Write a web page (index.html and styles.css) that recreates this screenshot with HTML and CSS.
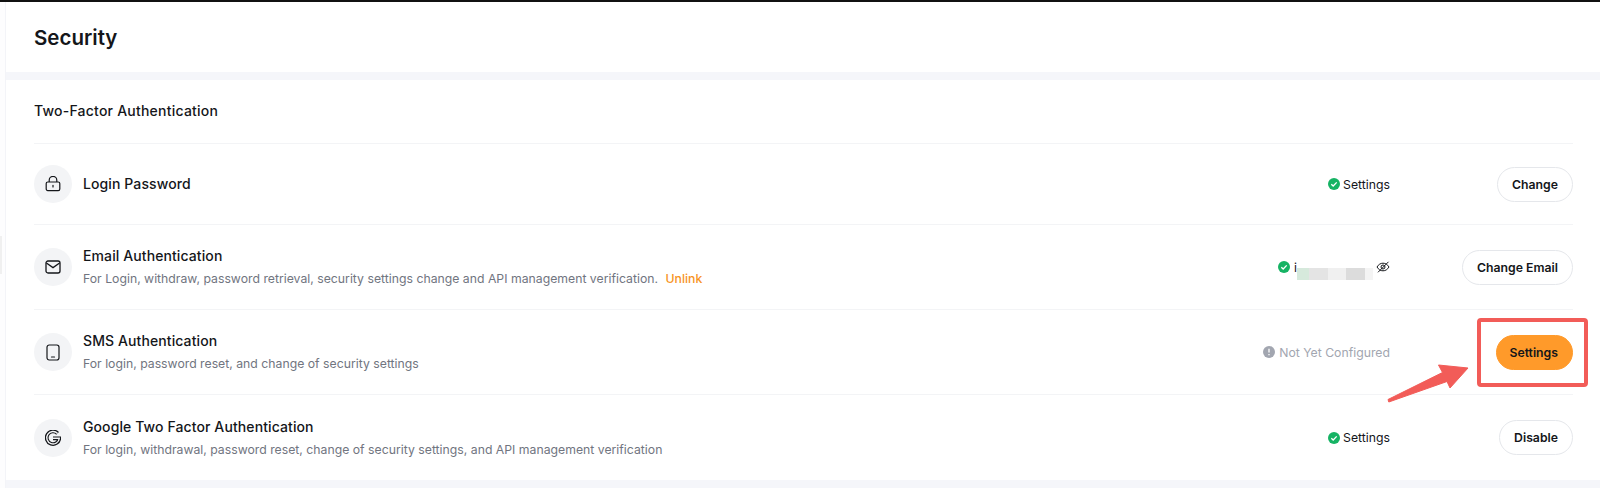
FILE: index.html
```html
<!DOCTYPE html>
<html lang="en">
<head>
    <meta charset="UTF-8">
    <title>Security</title>
    <link rel="stylesheet" href="styles.css">
</head>
<body>
    <div class="side-handle"></div>
    <div class="page">
        <header class="page-head">
            <h1>Security</h1>
        </header>

        <section class="card">
            <h2>Two-Factor Authentication</h2>

            <div class="row row-first">
                <div class="icon-circle">
                    <svg width="16" height="16" viewBox="0 0 16 16" fill="none" stroke="#14161a" stroke-width="1.2"><rect x="1.2" y="6" width="13.6" height="8.6" rx="1.6"/><path d="M4.2 6V4.2a3.8 3.8 0 0 1 7.6 0V6"/><path d="M8 9.4v1.6" stroke-linecap="round"/></svg>
                </div>
                <div class="info">
                    <div class="name">Login Password</div>
                </div>
                <div class="status">
                    <svg class="dot" width="12" height="12" viewBox="0 0 12 12"><circle cx="6" cy="6" r="6" fill="#16b364"/><path d="M3.3 6.2l1.9 1.8 3.5-3.6" fill="none" stroke="#fff" stroke-width="1.3"/></svg>
                    Settings
                </div>
                <div class="action"><button class="btn">Change</button></div>
            </div>

            <div class="row">
                <div class="icon-circle">
                    <svg width="16" height="14" viewBox="0 0 16 14" fill="none" stroke="#14161a" stroke-width="1.3"><rect x="1" y="1" width="14" height="12" rx="2"/><path d="M1.4 3l6.6 4.6L14.6 3"/></svg>
                </div>
                <div class="info">
                    <div class="name">Email Authentication</div>
                    <div class="desc">For Login, withdraw, password retrieval, security settings change and API management verification. <a class="unlink">Unlink</a></div>
                </div>
                <div class="status status-email">
                    <svg class="dot" width="12" height="12" viewBox="0 0 12 12"><circle cx="6" cy="6" r="6" fill="#16b364"/><path d="M3.3 6.2l1.9 1.8 3.5-3.6" fill="none" stroke="#fff" stroke-width="1.3"/></svg>
                    <span class="masked">i</span>
                    <svg class="eye" width="14" height="12" viewBox="0 0 14 12" fill="none" stroke="#14161a" stroke-width="1"><path d="M1 6c1.6-2.6 3.6-3.8 6-3.8S11.4 3.4 13 6c-1.6 2.6-3.6 3.8-6 3.8S2.6 8.6 1 6z"/><circle cx="7" cy="6" r="2"/><path d="M2 11.3L12.5.8"/></svg>
                    <div class="redact"><i></i><i></i><i></i><i></i><i></i></div>
                </div>
                <div class="action"><button class="btn">Change Email</button></div>
            </div>

            <div class="row">
                <div class="icon-circle">
                    <svg width="14" height="17" viewBox="0 0 14 17" fill="none" stroke="#14161a" stroke-width="1.2"><rect x="1" y="1" width="12" height="15" rx="2.2"/><path d="M5.5 13h3" stroke-linecap="round"/></svg>
                </div>
                <div class="info">
                    <div class="name">SMS Authentication</div>
                    <div class="desc">For login, password reset, and change of security settings</div>
                </div>
                <div class="status status-off">
                    <svg class="dot" width="12" height="12" viewBox="0 0 12 12"><circle cx="6" cy="6" r="6" fill="#a2a6b0"/><path d="M6 2.8v3.8M6 8v1.2" stroke="#fff" stroke-width="1.3"/></svg>
                    Not Yet Configured
                </div>
                <div class="action">
                    <button class="btn btn-primary">Settings</button>
                    <div class="mark-box"></div>
                </div>
            </div>

            <div class="row">
                <div class="icon-circle">
                    <svg width="16" height="16" viewBox="0 0 16 16" fill="none"><path d="M12.6 3.4A6.3 6.3 0 1 0 14.3 8.3H8" stroke="#14161a" stroke-width="3.8"/><path d="M12.6 3.4A6.3 6.3 0 1 0 14.3 8.3H8" stroke="#f3f4f6" stroke-width="1.4"/></svg>
                </div>
                <div class="info">
                    <div class="name">Google Two Factor Authentication</div>
                    <div class="desc">For login, withdrawal, password reset, change of security settings, and API management verification</div>
                </div>
                <div class="status">
                    <svg class="dot" width="12" height="12" viewBox="0 0 12 12"><circle cx="6" cy="6" r="6" fill="#16b364"/><path d="M3.3 6.2l1.9 1.8 3.5-3.6" fill="none" stroke="#fff" stroke-width="1.3"/></svg>
                    Settings
                </div>
                <div class="action"><button class="btn">Disable</button></div>
            </div>
        </section>
    </div>

    <!-- annotation arrow over the screenshot -->
    <svg class="arrow" width="90" height="46" viewBox="0 0 90 46"><path d="M1 39.5L1.8 42 60 21.5 63 28 81 8 51.5 5 55.5 12.5z" fill="#f25c58" stroke="#f25c58" stroke-linejoin="round"/></svg>
</body>
</html>
```

FILE: styles.css
```css
* {
    box-sizing: border-box;
}
html, body {
    margin: 0;
    height: 488px;
    overflow: hidden;
}
body {
    position: relative;
    font-family: 'Inter', 'Liberation Sans', sans-serif;
    background-color: #fdfdfe;
    color: #14161a;
    border-top: 2px solid #111;
}
.side-handle {
    position: absolute;
    left: 0;
    top: 234px;
    width: 2px;
    height: 38px;
    background-color: #f0f0f0;
}
.page {
    height: 486px;
    margin-left: 5px;
    background-color: #f5f6fa;
    border-left: 1px solid #f3f4f8;
}
.page-head {
    height: 70px;
    padding-left: 28px;
    display: flex;
    align-items: center;
    background-color: #fff;
}
h1 {
    margin: 1px 0 0;
    font-size: 20.5px;
    font-weight: 600;
}
.card {
    margin-top: 8px;
    padding: 0 27px 0 28px;
    background-color: #fff;
}
h2 {
    margin: 0;
    height: 64px;
    padding-top: 21px;
    font-size: 14px;
    line-height: 20px;
    font-weight: 500;
    letter-spacing: 0.22px;
    border-bottom: 1px solid #f3f4f6;
}
.row {
    display: flex;
    align-items: center;
    height: 85px;
    border-bottom: 1px solid #f3f4f6;
}
.row-first {
    height: 81px;
}
.row:last-child {
    border-bottom: none;
}
.icon-circle {
    width: 38px;
    height: 38px;
    margin-right: 11px;
    flex: none;
    display: flex;
    align-items: center;
    justify-content: center;
    border-radius: 50%;
    background-color: #f3f4f6;
}
.info {
    flex: 1;
}
.name {
    font-size: 14px;
    line-height: 20px;
    font-weight: 500;
    letter-spacing: 0.1px;
}
.desc {
    margin-top: 4px;
    font-size: 12.25px;
    line-height: 18px;
    color: #71757f;
}
.unlink {
    margin-left: 4px;
    color: #f7931e;
    font-weight: 500;
}
.status {
    position: relative;
    display: flex;
    align-items: center;
    gap: 3px;
    font-size: 12.25px;
}
.status-off {
    gap: 4px;
    color: #a2a6b0;
}
.status-email {
    gap: 4px;
    width: 112px;
}
.eye {
    margin-left: auto;
}
.redact {
    position: absolute;
    left: 19px;
    top: -12px;
    width: 76px;
    height: 32px;
    display: flex;
    align-items: flex-end;
    background-color: #fff;
}
.redact i {
    height: 12px;
    flex: 1;
    background-color: #e4e4e4;
}
.redact i:nth-child(1) {
    flex: none;
    width: 12px;
    background-color: #d6e9dc;
}
.redact i:nth-child(3) {
    background-color: #f0f0f0;
}
.redact i:nth-child(4) {
    background-color: #dcdcdc;
}
.redact i:nth-child(5) {
    flex: none;
    width: 8px;
    background-color: #f4f4f4;
}
.action {
    position: relative;
    width: 183px;
    display: flex;
    justify-content: flex-end;
}
.btn {
    height: 35px;
    padding: 0 14px;
    font-family: inherit;
    font-size: 12.25px;
    font-weight: 600;
    color: #14161a;
    background-color: #fff;
    border: 1px solid #e5e7eb;
    border-radius: 18px;
}
.btn-primary {
    padding: 0 14px 0 12px;
    background-color: #ff9a2a;
    border-color: #ff9a2a;
}
.mark-box {
    position: absolute;
    right: -15px;
    top: -17px;
    width: 111px;
    height: 69px;
    border: 4px solid #f25c58;
    border-radius: 4px;
}
.arrow {
    position: absolute;
    left: 1387px;
    top: 358px;
}
```
